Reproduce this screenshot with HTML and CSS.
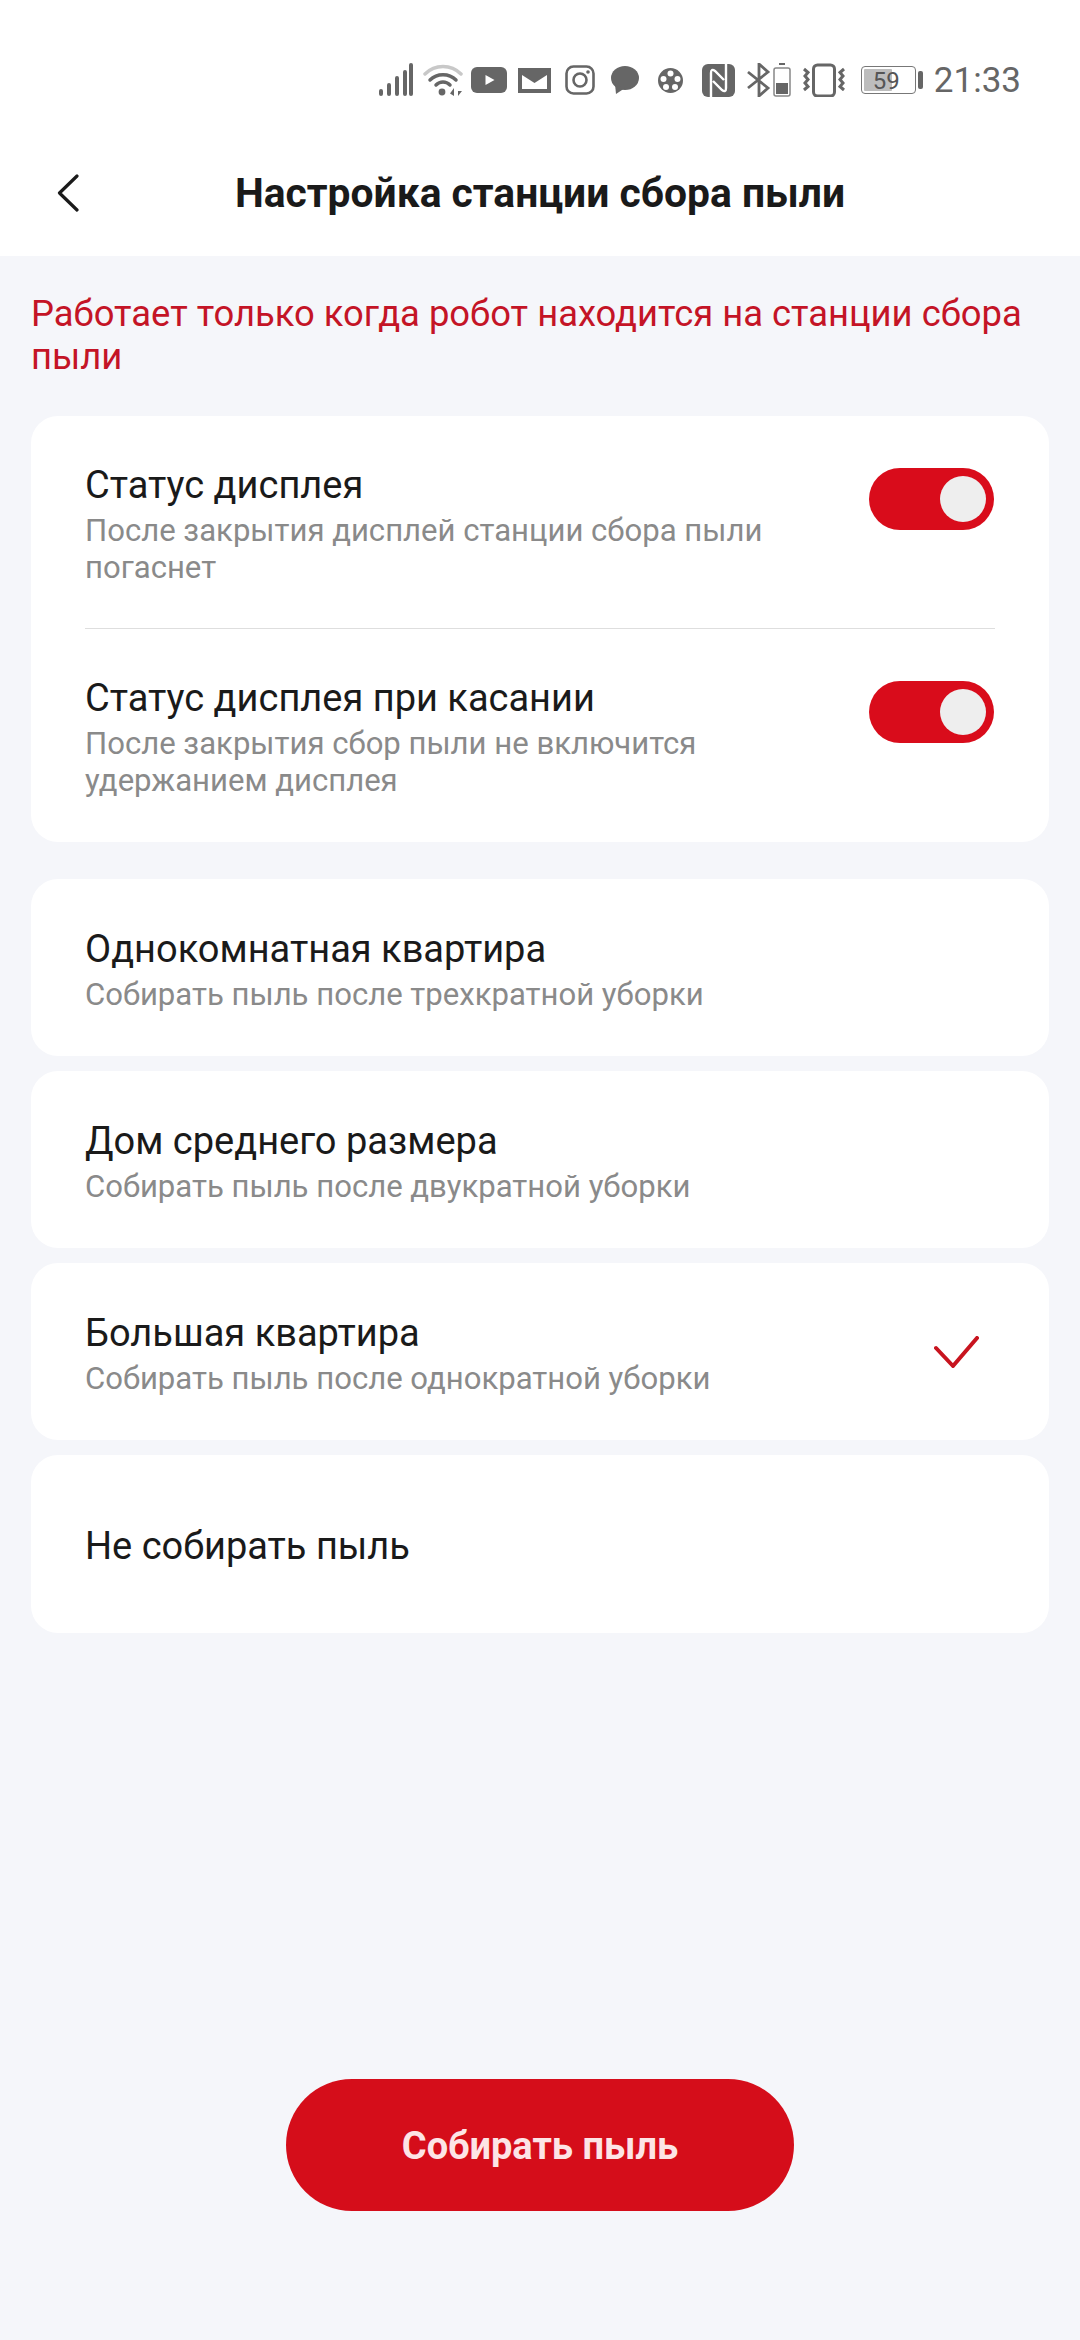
FILE: index.html
```html
<!DOCTYPE html>
<html lang="ru">
<head>
    <meta charset="UTF-8">
    <meta name="viewport" content="width=device-width, initial-scale=1.0">
    <title>Настройка станции сбора пыли</title>
    <link rel="stylesheet" href="styles.css">
</head>
<body>
    <div class="top">
        <!-- Status bar -->
        <div class="status">
            <svg class="ic signal" width="35" height="34" viewBox="0 0 35 34" fill="none" stroke="#666" stroke-width="4" stroke-linecap="round">
                <path d="M3 28v3M11 22v9M19 15v16M27 9v22"/>
                <path d="M33 2v29"/>
            </svg>
            <svg class="ic wifi" width="40" height="34" viewBox="0 0 40 34" fill="none" stroke-linecap="round">
                <path d="M2 11C12 1 28 1 38 11" stroke="#c8c8c8" stroke-width="3.5"/>
                <path d="M7 17C14 10 26 10 33 17M13 22C17 18 23 18 27 22" stroke="#666" stroke-width="3.5"/>
                <circle cx="19" cy="29" r="3.4" fill="#666"/>
                <path d="M31 25v8l-4-2.5zM35 25v8l4-5h-4z" fill="#666"/>
            </svg>
            <svg class="ic yt" width="36" height="26" viewBox="0 0 36 26">
                <rect width="36" height="26" rx="6" fill="#666"/>
                <path d="M14.500 8v10l9-5z" fill="#fff"/>
            </svg>
            <svg class="ic mail" width="33" height="25" viewBox="0 0 33 25">
                <path d="M0 0h33v25H0z" fill="#666"/>
                <path d="M4 7l12.500 8L29 7v14H4z" fill="#fff"/>
            </svg>
            <svg class="ic insta" width="30" height="30" viewBox="0 0 30 30" fill="none" stroke="#666" stroke-width="2.600">
                <rect x="1.500" y="1.500" width="27" height="27" rx="7"/>
                <circle cx="15" cy="15" r="6.500"/>
                <circle cx="23" cy="7" r="1.800" fill="#666" stroke="none"/>
            </svg>
            <svg class="ic bubble" width="28" height="28" viewBox="0 0 28 28">
                <ellipse cx="14" cy="12" rx="14" ry="12" fill="#666"/>
                <path d="M4 18l1 10 9-6z" fill="#666"/>
            </svg>
            <svg class="ic film" width="25" height="25" viewBox="0 0 25 25">
                <circle cx="12.500" cy="12.500" r="12.500" fill="#666"/>
                <circle cx="12.500" cy="5.500" r="3" fill="#fff"/>
                <circle cx="5.500" cy="11" r="3" fill="#fff"/>
                <circle cx="19.500" cy="11" r="3" fill="#fff"/>
                <circle cx="8" cy="19" r="3" fill="#fff"/>
                <circle cx="17" cy="19" r="3" fill="#fff"/>
            </svg>
            <svg class="ic nfc" width="33" height="33" viewBox="0 0 33 33">
                <rect width="33" height="33" rx="6" fill="#666"/>
                <path d="M9 33V9Q9 4 13 7L22 16M24 0V24Q24 29 20 26L11 17" stroke="#fff" stroke-width="2.400" fill="none"/>
            </svg>
            <svg class="ic bt" width="25" height="34" viewBox="0 0 25 34" fill="none" stroke="#666" stroke-width="2.800">
                <path d="M2 9l20 16-9 8V1l9 8L2 25"/>
            </svg>
            <svg class="ic batsmall" width="18" height="34" viewBox="0 0 18 34">
                <path d="M6 1h6" stroke="#666" stroke-width="2"/>
                <rect x="1" y="5" width="16" height="28" rx="2" fill="none" stroke="#888" stroke-width="1.500"/>
                <rect x="3" y="20" width="12" height="11" fill="#666"/>
            </svg>
            <svg class="ic vib" width="44" height="34" viewBox="0 0 44 34" fill="none" stroke="#666">
                <rect x="11.500" y="2" width="21" height="31" rx="4" stroke-width="3"/>
                <path d="M2 6l4 3.500-3 3.500 3 3.500-3 3.500 3 3.500-4 3.500M42 6l-4 3.500 3 3.500-3 3.500 3 3.500-3 3.500 4 3.500" stroke-width="3"/>
            </svg>
            <div class="battery">
                <div class="battery-box">
                    <div class="battery-fill"></div>
                    <span class="battery-num">59</span>
                </div>
                <div class="battery-tip"></div>
            </div>
            <span class="time">21:33</span>
        </div>

        <!-- Header -->
        <div class="nav">
            <svg class="back" width="22" height="38" viewBox="0 0 22 38" fill="none" stroke="#1a1a1a" stroke-width="3.200" stroke-linecap="round" stroke-linejoin="round">
                <path d="M20 2L2.500 19 20 36"/>
            </svg>
            <h1>Настройка станции сбора пыли</h1>
        </div>
    </div>

    <div class="content">
        <p class="warning">Работает только когда робот находится на станции сбора пыли</p>

        <div class="card">
            <div class="row row-line">
                <div class="row-text">
                    <div class="title">Статус дисплея</div>
                    <div class="sub">После закрытия дисплей станции сбора пыли погаснет</div>
                </div>
                <div class="toggle"><div class="knob"></div></div>
            </div>
            <div class="row">
                <div class="row-text">
                    <div class="title">Статус дисплея при касании</div>
                    <div class="sub">После закрытия сбор пыли не включится удержанием дисплея</div>
                </div>
                <div class="toggle"><div class="knob"></div></div>
            </div>
        </div>

        <div class="options">
            <div class="option">
                <div class="option-text">
                    <div class="title">Однокомнатная квартира</div>
                    <div class="sub">Собирать пыль после трехкратной уборки</div>
                </div>
            </div>
            <div class="option">
                <div class="option-text">
                    <div class="title">Дом среднего размера</div>
                    <div class="sub">Собирать пыль после двукратной уборки</div>
                </div>
            </div>
            <div class="option">
                <div class="option-text">
                    <div class="title">Большая квартира</div>
                    <div class="sub">Собирать пыль после однократной уборки</div>
                </div>
                <svg class="check" width="45" height="32" viewBox="0 0 45 32" fill="none" stroke="#c8141f" stroke-width="4" stroke-linecap="round" stroke-linejoin="round">
                    <path d="M2 12l17 18L43 2"/>
                </svg>
            </div>
            <div class="option option-single">
                <div class="option-text">
                    <div class="title">Не собирать пыль</div>
                </div>
            </div>
        </div>

        <button class="collect">Собирать пыль</button>
    </div>
</body>
</html>
```

FILE: styles.css
```css
body {
    margin: 0;
    min-height: 2340px;
    display: flex;
    flex-direction: column;
    background: #f5f6fa;
    font-family: Roboto, "Noto Sans", sans-serif;
}

.top {
    background: #fff;
    height: 256px;
}

.status {
    height: 40px;
    padding: 60px 59px 30px 0;
    display: flex;
    justify-content: flex-end;
    align-items: center;
}
.ic { flex: none; }
.wifi { margin-left: 10px; }
.yt { margin-left: 8px; }
.mail { margin-left: 11px; }
.insta { margin-left: 14px; }
.bubble { margin-left: 16px; }
.film { margin-left: 19px; }
.nfc { margin-left: 19px; }
.bt { margin-left: 11px; }
.batsmall { margin-left: 2px; }
.vib { margin-left: 11px; }

.battery {
    margin-left: 15px;
    display: flex;
    align-items: center;
    gap: 2px;
}
.battery-box {
    position: relative;
    border: 1.5px solid #777;
    border-radius: 4px;
    padding: 2px;
    width: 49px;
    height: 22px;
}
.battery-fill {
    width: 28px;
    height: 22px;
    background: #bdbdbd;
    border-radius: 1px;
}
.battery-num {
    position: absolute;
    left: 11px;
    top: 1px;
    font-size: 24px;
    line-height: 26px;
    color: #555;
}
.battery-tip {
    width: 5px;
    height: 18px;
    background: #666;
    border-radius: 2px;
}
.time {
    margin-left: 11px;
    font-size: 35px;
    color: #666;
}

.nav {
    height: 126px;
    position: relative;
    display: flex;
    align-items: center;
    justify-content: center;
}
.back {
    position: absolute;
    left: 57px;
    top: 44px;
}
h1 {
    margin: 0;
    font-size: 40.8px;
    font-weight: 700;
    color: #1a1a1a;
}

.content {
    flex: 1;
    padding: 36px 31px 129px;
    display: flex;
    flex-direction: column;
}

.warning {
    margin: 0 0 38px;
    font-size: 36.4px;
    line-height: 43px;
    color: #c41426;
}

.card {
    background: #fff;
    border-radius: 27px;
    padding: 0 54px;
    margin-bottom: 37px;
}
.row {
    display: flex;
    justify-content: space-between;
    align-items: flex-start;
    padding: 46px 0 43px;
}
.row-line {
    border-bottom: 1px solid #dedede;
    padding-bottom: 42px;
}
.row-text { width: 760px; }

.title {
    font-size: 38px;
    line-height: 46px;
    color: #1a1a1a;
}
.sub {
    margin-top: 4px;
    font-size: 31.1px;
    line-height: 37px;
    color: #8a8a8a;
}

.toggle {
    width: 125px;
    height: 62px;
    margin: 6px 1px 0 0;
    padding: 8px;
    box-sizing: border-box;
    display: flex;
    justify-content: flex-end;
    background: #d90c1b;
    border-radius: 31px;
}
.knob {
    width: 46px;
    height: 46px;
    border-radius: 50%;
    background: #eeeeee;
}

.options {
    display: flex;
    flex-direction: column;
    gap: 15px;
}
.option {
    background: #fff;
    border-radius: 27px;
    height: 177px;
    padding: 0 54px;
    display: flex;
    align-items: center;
    justify-content: space-between;
}
.option-text { padding-top: 4px; }
.option-single { height: 178px; }
.check { margin-right: 16px; }

.collect {
    margin: auto auto 0;
    padding: 2px 0 0;
    width: 508px;
    height: 132px;
    border: none;
    border-radius: 66px;
    background: #d50d1a;
    color: #fde4e6;
    font-family: inherit;
    font-size: 38px;
    font-weight: 700;
}
```
